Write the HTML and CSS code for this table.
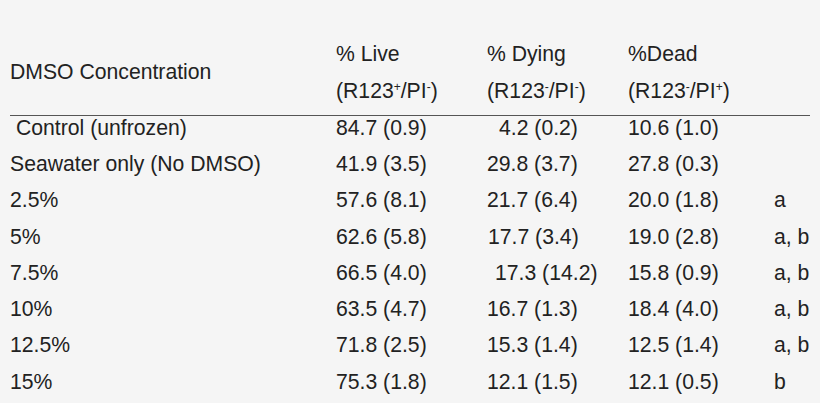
FILE: index.html
```html
<!DOCTYPE html>
<html>
<head>
<meta charset="utf-8">
<link rel="stylesheet" href="styles.css">
</head>
<body>
<table class="data">
  <colgroup>
    <col class="c1"><col class="c2"><col class="c3"><col class="c4"><col class="c5">
  </colgroup>
  <thead>
    <tr class="h1">
      <th rowspan="2" class="label">DMSO Concentration</th>
      <th>% Live</th>
      <th>% Dying</th>
      <th>%Dead</th>
      <th></th>
    </tr>
    <tr class="h2">
      <th>(R123<sup>+</sup>/PI<sup>-</sup>)</th>
      <th>(R123<sup>-</sup>/PI<sup>-</sup>)</th>
      <th>(R123<sup>-</sup>/PI<sup>+</sup>)</th>
      <th></th>
    </tr>
  </thead>
  <tbody>
    <tr class="first">
      <td class="ind6">Control (unfrozen)</td><td>84.7 (0.9)</td><td class="ind12">4.2 (0.2)</td><td>10.6 (1.0)</td><td></td>
    </tr>
    <tr><td>Seawater only (No DMSO)</td><td>41.9 (3.5)</td><td>29.8 (3.7)</td><td>27.8 (0.3)</td><td></td></tr>
    <tr><td>2.5%</td><td>57.6 (8.1)</td><td>21.7 (6.4)</td><td>20.0 (1.8)</td><td>a</td></tr>
    <tr><td>5%</td><td>62.6 (5.8)</td><td class="ind1">17.7 (3.4)</td><td>19.0 (2.8)</td><td>a, b</td></tr>
    <tr><td>7.5%</td><td>66.5 (4.0)</td><td class="ind8">17.3 (14.2)</td><td>15.8 (0.9)</td><td>a, b</td></tr>
    <tr><td>10%</td><td>63.5 (4.7)</td><td>16.7 (1.3)</td><td>18.4 (4.0)</td><td>a, b</td></tr>
    <tr><td>12.5%</td><td>71.8 (2.5)</td><td>15.3 (1.4)</td><td>12.5 (1.4)</td><td>a, b</td></tr>
    <tr><td>15%</td><td>75.3 (1.8)</td><td>12.1 (1.5)</td><td>12.1 (0.5)</td><td>b</td></tr>
  </tbody>
</table>
</body>
</html>
```
FILE: styles.css
```css
html, body {
  margin: 0;
  padding: 0;
  background: #f5f5f5;
}
body {
  padding: 35px 10px 0 10px;
  font-family: "Liberation Sans", Arial, sans-serif;
  font-size: 21.2px;
  color: #222;
}
.data {
  border-collapse: collapse;
  table-layout: fixed;
  width: 800px;
}
.c1 { width: 326px; }
.c2 { width: 151px; }
.c3 { width: 141px; }
.c4 { width: 146px; }
.c5 { width: 36px; }
.data th, .data td {
  padding: 0;
  text-align: left;
  font-weight: normal;
  white-space: nowrap;
  vertical-align: middle;
}
.data th.label {
  vertical-align: middle;
  padding-bottom: 8px;
}
.h1 th { height: 37px; line-height: 37px; }
.h2 th { height: 37px; line-height: 37px; padding-bottom: 6px; }
.data thead { border-bottom: 1.5px solid #555; }
.data sup {
  font-size: 12px;
  line-height: 0;
  vertical-align: 7px;
}
.data td { height: 36.3px; line-height: 36.3px; }
.first td { height: 24px; line-height: 24px; padding-bottom: 6px; }
.ind1 { padding-left: 1px !important; }
.ind6 { padding-left: 6px !important; }
.ind8 { padding-left: 8px !important; }
.ind12 { padding-left: 12px !important; }
```
